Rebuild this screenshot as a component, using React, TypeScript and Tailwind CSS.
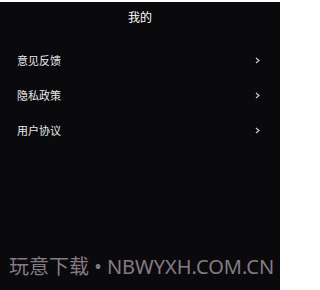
const items = ["意见反馈", "隐私政策", "用户协议"];

export default function App() {
  return (
    <div className="w-[282px] h-[290px] bg-white pt-[2px] pr-[2px]">
      <div
        className="relative h-full bg-[#0a0a0c] text-white"
        style={{ fontFamily: '"Noto Sans", "Noto Sans CJK SC", sans-serif' }}
      >
        <div className="h-[32px] flex items-center justify-center text-[12px] leading-none">我的</div>
        <div className="pt-[9px]">
          {items.map((item) => (
            <div key={item} className="h-[35px] flex items-center justify-between pl-[17px] pr-[20px]">
              <span className="text-[11px] leading-none text-[#e8e8ec]">{item}</span>
              <svg width="5" height="7" viewBox="0 0 5 7" className="text-[#c8c8d8]">
                <path d="M1 1 L4 3.5 L1 6" fill="none" stroke="currentColor" strokeWidth="1.2" />
              </svg>
            </div>
          ))}
        </div>
        <div className="absolute left-[9px] top-[255px] text-[20px] leading-none text-[#857a86] whitespace-nowrap">
          玩意下载 • NBWYXH.COM.CN
        </div>
      </div>
    </div>
  );
}
